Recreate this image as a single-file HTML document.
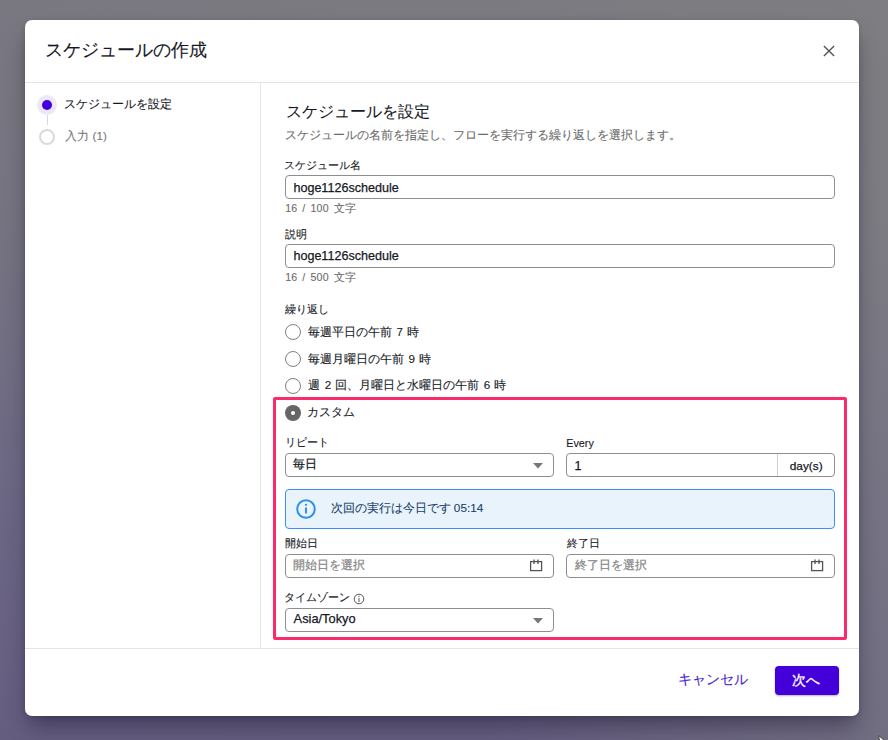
<!DOCTYPE html>
<html lang="ja"><head><meta charset="utf-8">
<style>
*{box-sizing:border-box;margin:0;padding:0}
html,body{width:888px;height:740px;overflow:hidden}
body{font-family:"Liberation Sans",sans-serif;color:#16191f;position:relative;
background:linear-gradient(90deg,rgba(100,85,135,.08) 0%,rgba(128,126,135,0) 40%,rgba(128,126,135,0) 55%,rgba(130,130,132,.45) 100%),linear-gradient(180deg,#7b7a80 0%,#787780 25%,#737182 45%,#6c6784 70%,#655e80 100%);}
.a{position:absolute;white-space:nowrap;-webkit-text-stroke-width:0.1px}
.val{-webkit-text-stroke-width:0.25px!important}
#modal{position:absolute;left:25px;top:20px;width:834px;height:696px;background:#fff;border-radius:7px;
box-shadow:0 14px 22px -4px rgba(25,15,45,.45),0 1px 5px rgba(25,15,45,.16);}
.hl{position:absolute;background:#e4e4e4}
.inp{position:absolute;border:1px solid #8e8e8e;border-radius:4px;background:#fff}
.lbl{font-size:11.5px;color:#16191f;line-height:14px}
.help{font-size:11px;color:#6b6b6b;line-height:14px}
.val{font-size:12.5px;color:#16191f;line-height:16px}
.radio{position:absolute;width:16px;height:16px;border:1.2px solid #808080;border-radius:50%}
.rtxt{font-size:12.5px;color:#16191f;line-height:16px}
</style></head><body>
<div id="modal"></div>
<!-- header -->
<div id="t_title" class="a" style="left:44.8px;top:38px;font-size:17.77px;line-height:24px;color:#16191f">スケジュールの作成</div>
<svg class="a" style="left:822px;top:44px" width="14" height="14" viewBox="0 0 14 14"><path d="M1.9 1.9L12.1 12.1M12.1 1.9L1.9 12.1" stroke="#555" stroke-width="1.4"/></svg>
<div class="hl" style="left:25px;top:82px;width:834px;height:1px"></div>
<div class="hl" style="left:260px;top:83px;width:1px;height:565px"></div>
<div class="hl" style="left:25px;top:648px;width:834px;height:1px"></div>
<!-- nav -->
<div class="a" style="left:37px;top:95px;width:20px;height:20px;border-radius:50%;background:#ece8fb"></div>
<div class="a" style="left:42px;top:100px;width:10px;height:10px;border-radius:50%;background:#4400dd"></div>
<div class="a" style="left:47px;top:115px;width:1px;height:10px;background:#d8d8d8"></div>
<div class="a" style="left:39px;top:129px;width:16px;height:16px;border-radius:50%;border:2px solid #dadada"></div>
<div id="t_nav1" class="a" style="left:64.4px;top:95.9px;font-size:11.54px;line-height:16px;color:#16191f">スケジュールを設定</div>
<div id="t_nav2" class="a" style="left:65.4px;top:128.4px;font-size:11.62px;line-height:16px;color:#777">入力 (1)</div>
<!-- content -->
<div id="t_head" class="a" style="left:285.6px;top:102.4px;font-size:15.51px;line-height:20px;color:#16191f">スケジュールを設定</div>
<div id="t_sub" class="a" style="left:285.0px;top:126.8px;font-size:12.09px;line-height:16px;color:#6b6b6b">スケジュールの名前を指定し、フローを実行する繰り返しを選択します。</div>

<div id="t_l_name" class="a lbl" style="left:284.4px;top:158.2px;font-size:10.59px">スケジュール名</div>
<div class="inp" style="left:285px;top:175px;width:550px;height:24px"></div>
<div id="t_v_name" class="a val" style="left:293.4px;top:180.0px;font-size:12.58px">hoge1126schedule</div>
<div id="t_h_name" class="a help" style="left:285.2px;top:200.7px;font-size:10.6px;word-spacing:2px;letter-spacing:0.15px">16 / 100 文字</div>

<div id="t_l_desc" class="a lbl" style="left:285.4px;top:226.8px;font-size:10.60px">説明</div>
<div class="inp" style="left:285px;top:244px;width:550px;height:24px"></div>
<div id="t_v_desc" class="a val" style="left:293.4px;top:248.4px;font-size:12.58px">hoge1126schedule</div>
<div id="t_h_desc" class="a help" style="left:285.2px;top:269.9px;font-size:10.6px;word-spacing:2px;letter-spacing:0.15px">16 / 500 文字</div>

<div id="t_l_rep" class="a lbl" style="left:285.0px;top:301.7px;font-size:10.72px">繰り返し</div>
<div class="radio" style="left:285px;top:324px"></div>
<div id="t_r1" class="a rtxt" style="left:308.4px;top:323.5px;font-size:11.60px;word-spacing:1px">毎週平日の午前 7 時</div>
<div class="radio" style="left:285px;top:351px"></div>
<div id="t_r2" class="a rtxt" style="left:308.4px;top:350.9px;font-size:11.60px;word-spacing:1px">毎週月曜日の午前 9 時</div>
<div class="radio" style="left:285px;top:378px"></div>
<div id="t_r3" class="a rtxt" style="left:308.4px;top:376.7px;font-size:11.70px;word-spacing:1px">週 2 回、月曜日と水曜日の午前 6 時</div>
<div class="a" style="left:285px;top:405px;width:16px;height:16px;border-radius:50%;background:#666"></div>
<div class="a" style="left:290.7px;top:410.7px;width:4.6px;height:4.6px;border-radius:50%;background:#fff"></div>
<div id="t_r4" class="a rtxt" style="left:307.4px;top:404.3px;font-size:11.51px">カスタム</div>

<div id="t_l_repeat" class="a lbl" style="left:285.2px;top:435.3px;font-size:10.73px">リピート</div>
<div id="t_l_every" class="a lbl" style="left:566.2px;top:436.2px;font-size:10.83px">Every</div>
<div class="inp" style="left:285px;top:453px;width:269px;height:24px"></div>
<div id="t_v_repeat" class="a val" style="left:293.2px;top:455.8px;font-size:11.61px">毎日</div>
<svg class="a" style="left:533px;top:462.7px" width="10" height="6" viewBox="0 0 10 6"><path d="M0 0H10L5 5.5Z" fill="#777"/></svg>
<div class="inp" style="left:566px;top:453px;width:269px;height:24px"></div>
<div class="a" style="left:777px;top:454px;width:1px;height:22px;background:#d0d0d0"></div>
<div id="t_v_every" class="a val" style="left:574.6px;top:458.4px;font-size:12.50px">1</div>
<div id="t_v_days" class="a val" style="left:789.8px;top:457.8px;font-size:11.80px">day(s)</div>

<div class="a" style="left:285px;top:489px;width:550px;height:40px;border:1.5px solid #3a92ec;border-radius:4px;background:#e8f3fc"></div>
<svg class="a" style="left:296px;top:499px" width="20" height="20" viewBox="0 0 20 20"><circle cx="10" cy="10" r="8.8" fill="none" stroke="#2f8fec" stroke-width="2"/><path d="M10 8.5V14.5" stroke="#2f8fec" stroke-width="2"/><circle cx="10" cy="5.8" r="1.1" fill="#2f8fec"/></svg>
<div id="t_alert" class="a" style="left:330.6px;top:500.1px;font-size:11.76px;line-height:16px;color:#1b3f68">次回の実行は今日です 05:14</div>

<div id="t_l_start" class="a lbl" style="left:285.2px;top:535.7px;font-size:10.59px">開始日</div>
<div id="t_l_end" class="a lbl" style="left:566.6px;top:536.0px;font-size:10.72px">終了日</div>
<div class="inp" style="left:285px;top:554px;width:269px;height:24px"></div>
<div id="t_p_start" class="a val" style="left:293.4px;top:556.8px;color:#888;font-size:11.57px">開始日を選択</div>
<div class="inp" style="left:566px;top:554px;width:269px;height:24px"></div>
<div id="t_p_end" class="a val" style="left:574.8px;top:557.3px;color:#888;font-size:11.51px">終了日を選択</div>
<svg class="a" style="left:529px;top:558px" width="14" height="14" viewBox="0 0 14 14"><rect x="1.6" y="3.6" width="11" height="9" fill="none" stroke="#555" stroke-width="1.3"/><path d="M5 1.5V6M9 1.5V6" stroke="#555" stroke-width="1.3"/></svg>
<svg class="a" style="left:810px;top:558px" width="14" height="14" viewBox="0 0 14 14"><rect x="1.6" y="3.6" width="11" height="9" fill="none" stroke="#555" stroke-width="1.3"/><path d="M5 1.5V6M9 1.5V6" stroke="#555" stroke-width="1.3"/></svg>

<div id="t_l_tz" class="a lbl" style="left:284.4px;top:589.9px;font-size:10.50px">タイムゾーン</div>
<svg class="a" style="left:353px;top:593px" width="12" height="12" viewBox="0 0 12 12"><circle cx="6" cy="6" r="4.8" fill="none" stroke="#555" stroke-width="1"/><path d="M6 5V9" stroke="#555" stroke-width="1"/><circle cx="6" cy="3.4" r=".6" fill="#555"/></svg>
<div class="inp" style="left:285px;top:608px;width:269px;height:24px"></div>
<div id="t_v_tz" class="a val" style="left:293.6px;top:611.4px;font-size:12.83px">Asia/Tokyo</div>
<svg class="a" style="left:533px;top:617.7px" width="10" height="6" viewBox="0 0 10 6"><path d="M0 0H10L5 5.5Z" fill="#777"/></svg>

<!-- pink box -->
<div class="a" style="left:273px;top:397px;width:574px;height:243px;border:3px solid #fb2a6b;border-radius:2px"></div>

<!-- footer -->
<div id="t_cancel" class="a" style="left:678.4px;top:671.0px;font-size:13.52px;line-height:18px;color:#4a22d2">キャンセル</div>
<div class="a" style="left:775px;top:666px;width:64px;height:28.5px;border-radius:4px;background:#4400d8;box-shadow:0 1px 2px rgba(0,0,0,.3)"></div>
<div id="t_next" class="a" style="left:792.2px;top:670.6px;font-size:13.90px;line-height:18px;color:#fff;-webkit-text-stroke-width:0.3px">次へ</div>
<svg class="a" style="left:877px;top:734px" width="11" height="8" viewBox="0 0 11 8"><path d="M1.5 1.5L9 8H3Z" fill="#fff" stroke="#333" stroke-width=".8"/></svg>
</body></html>
